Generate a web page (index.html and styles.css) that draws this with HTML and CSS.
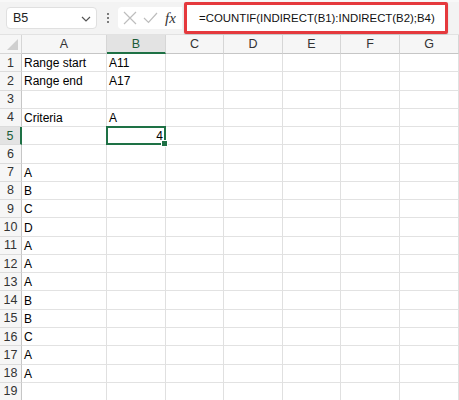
FILE: index.html
```html
<!DOCTYPE html>
<html>
<head>
<meta charset="utf-8">
<link rel="stylesheet" href="styles.css">
</head>
<body>
<div class="app">
  <div class="toolbar">
    <div class="namebox">
      <span class="name">B5</span>
      <svg class="chev" width="10" height="6" viewBox="0 0 10 6"><path d="M1 1 L5 5 L9 1" fill="none" stroke="#555" stroke-width="1.2"/></svg>
    </div>
    <div class="dots"><span></span><span></span><span></span></div>
    <div class="fxbox">
      <svg width="14" height="14" viewBox="0 0 14 14"><path d="M1 1 L13 13 M13 1 L1 13" stroke="#bdbdbd" stroke-width="1.2" fill="none"/></svg>
      <svg width="15" height="12" viewBox="0 0 15 12"><path d="M1 6 L5.5 10.5 L14 1" stroke="#bdbdbd" stroke-width="1.2" fill="none"/></svg>
      <span class="fx">fx</span>
    </div>
    <div class="formula">=COUNTIF(INDIRECT(B1):INDIRECT(B2);B4)</div>
  </div>
  <div class="sheet">
    <div class="corner"><span class="tri"></span></div>
    <div class="ch">A</div><div class="ch sel">B</div><div class="ch">C</div><div class="ch">D</div><div class="ch">E</div><div class="ch">F</div><div class="ch">G</div>

    <div class="rh">1</div><div class="c">Range start</div><div class="c">A11</div><div class="c"></div><div class="c"></div><div class="c"></div><div class="c"></div><div class="c"></div>
    <div class="rh">2</div><div class="c">Range end</div><div class="c">A17</div><div class="c"></div><div class="c"></div><div class="c"></div><div class="c"></div><div class="c"></div>
    <div class="rh">3</div><div class="c"></div><div class="c"></div><div class="c"></div><div class="c"></div><div class="c"></div><div class="c"></div><div class="c"></div>
    <div class="rh">4</div><div class="c">Criteria</div><div class="c">A</div><div class="c"></div><div class="c"></div><div class="c"></div><div class="c"></div><div class="c"></div>
    <div class="rh sel">5</div><div class="c"></div><div class="c num active">4<span class="handle"></span></div><div class="c"></div><div class="c"></div><div class="c"></div><div class="c"></div><div class="c"></div>
    <div class="rh">6</div><div class="c"></div><div class="c"></div><div class="c"></div><div class="c"></div><div class="c"></div><div class="c"></div><div class="c"></div>
    <div class="rh">7</div><div class="c">A</div><div class="c"></div><div class="c"></div><div class="c"></div><div class="c"></div><div class="c"></div><div class="c"></div>
    <div class="rh">8</div><div class="c">B</div><div class="c"></div><div class="c"></div><div class="c"></div><div class="c"></div><div class="c"></div><div class="c"></div>
    <div class="rh">9</div><div class="c">C</div><div class="c"></div><div class="c"></div><div class="c"></div><div class="c"></div><div class="c"></div><div class="c"></div>
    <div class="rh">10</div><div class="c">D</div><div class="c"></div><div class="c"></div><div class="c"></div><div class="c"></div><div class="c"></div><div class="c"></div>
    <div class="rh">11</div><div class="c">A</div><div class="c"></div><div class="c"></div><div class="c"></div><div class="c"></div><div class="c"></div><div class="c"></div>
    <div class="rh">12</div><div class="c">A</div><div class="c"></div><div class="c"></div><div class="c"></div><div class="c"></div><div class="c"></div><div class="c"></div>
    <div class="rh">13</div><div class="c">A</div><div class="c"></div><div class="c"></div><div class="c"></div><div class="c"></div><div class="c"></div><div class="c"></div>
    <div class="rh">14</div><div class="c">B</div><div class="c"></div><div class="c"></div><div class="c"></div><div class="c"></div><div class="c"></div><div class="c"></div>
    <div class="rh">15</div><div class="c">B</div><div class="c"></div><div class="c"></div><div class="c"></div><div class="c"></div><div class="c"></div><div class="c"></div>
    <div class="rh">16</div><div class="c">C</div><div class="c"></div><div class="c"></div><div class="c"></div><div class="c"></div><div class="c"></div><div class="c"></div>
    <div class="rh">17</div><div class="c">A</div><div class="c"></div><div class="c"></div><div class="c"></div><div class="c"></div><div class="c"></div><div class="c"></div>
    <div class="rh">18</div><div class="c">A</div><div class="c"></div><div class="c"></div><div class="c"></div><div class="c"></div><div class="c"></div><div class="c"></div>
    <div class="rh">19</div><div class="c"></div><div class="c"></div><div class="c"></div><div class="c"></div><div class="c"></div><div class="c"></div><div class="c"></div>
  </div>
</div>
</body>
</html>
```
FILE: styles.css
```css
html, body {
  margin: 0;
  padding: 0;
  background: #ffffff;
  overflow: hidden;
}
.app {
  width: 459px;
  height: 400px;
  overflow: hidden;
  font-family: "Liberation Sans", Arial, sans-serif;
  color: #000;
}
.toolbar {
  height: 35px;
  box-sizing: border-box;
  background: #f3f3f3;
  border-top: 2px solid #f8f8f8;
  display: flex;
  align-items: center;
  padding-left: 6px;
  border-bottom: 1px solid #e2e2e2;
}
.namebox {
  width: 91px;
  height: 22px;
  box-sizing: border-box;
  background: #fff;
  border: 1px solid #e0e0e0;
  border-radius: 4px;
  display: flex;
  align-items: center;
  justify-content: space-between;
  padding: 0 5px 0 6px;
  font-size: 12.5px;
  color: #222;
}
.chev { margin-top: 1px; }
.dots {
  width: 21px;
  display: flex;
  flex-direction: column;
  align-items: center;
  gap: 2px;
}
.dots span {
  width: 2px;
  height: 2px;
  background: #555;
  border-radius: 1px;
}
.fxbox {
  width: 64px;
  height: 22px;
  box-sizing: border-box;
  background: #fff;
  border-radius: 4px 0 0 4px;
  display: flex;
  align-items: center;
  gap: 6px;
  padding-left: 5px;
}
.fx {
  font-family: "Liberation Serif", "Times New Roman", serif;
  font-style: italic;
  font-size: 15px;
  color: #333;
  margin-left: 1px;
}
.formula {
  margin-left: 2px;
  width: 264px;
  height: 32px;
  box-sizing: border-box;
  border: 3px solid #e5393d;
  border-radius: 2px;
  background: #fff;
  display: flex;
  align-items: center;
  padding-left: 12px;
  font-size: 11.4px;
  color: #111;
  white-space: nowrap;
  box-shadow: 0 1px 2px rgba(0,0,0,0.15);
}
.sheet {
  display: grid;
  grid-template-columns: 22px 85px 59px 58px 59px 58px 59px 59px;
  grid-template-rows: 19px;
  grid-auto-rows: 18.28px;
  font-size: 12px;
}
.corner {
  background: #f6f6f6;
  border-right: 1px solid #d6d6d6;
  border-bottom: 1px solid #d6d6d6;
  box-sizing: border-box;
  display: flex;
  align-items: flex-end;
  justify-content: flex-end;
  padding: 0 3px 3px 0;
}
.tri {
  width: 0;
  height: 0;
  border-left: 11px solid transparent;
  border-bottom: 11px solid #cfcfcf;
}
.ch {
  background: #f6f6f6;
  border-right: 1px solid #d6d6d6;
  border-bottom: 1px solid #c6c6c6;
  box-sizing: border-box;
  display: flex;
  align-items: center;
  justify-content: center;
  color: #333;
  font-size: 12.5px;
}
.ch.sel {
  background: #e3e3e3;
  border-bottom: 2px solid #1e7145;
  color: #1b5c37;
}
.rh {
  background: #f6f6f6;
  border-right: 1px solid #c6c6c6;
  border-bottom: 1px solid #dcdcdc;
  box-sizing: border-box;
  display: flex;
  align-items: center;
  justify-content: center;
  color: #333;
  font-size: 12.5px;
}
.rh.sel {
  background: #e3e3e3;
  border-right: 2px solid #1e7145;
  color: #1b5c37;
}
.c {
  border-right: 1px solid #e0e0e0;
  border-bottom: 1px solid #e2e2e2;
  box-sizing: border-box;
  display: flex;
  align-items: center;
  padding: 1px 2px 0 2px;
  white-space: nowrap;
}
.c.num {
  justify-content: flex-end;
}
.c.active {
  position: relative;
}
.c.active::after {
  content: "";
  position: absolute;
  left: -1px;
  top: -1px;
  right: -1px;
  bottom: -1px;
  border: 2px solid #1e7145;
}
.handle {
  position: absolute;
  right: -3px;
  bottom: -3px;
  width: 5px;
  height: 5px;
  background: #1e7145;
  border: 1px solid #fff;
  z-index: 2;
}
```
